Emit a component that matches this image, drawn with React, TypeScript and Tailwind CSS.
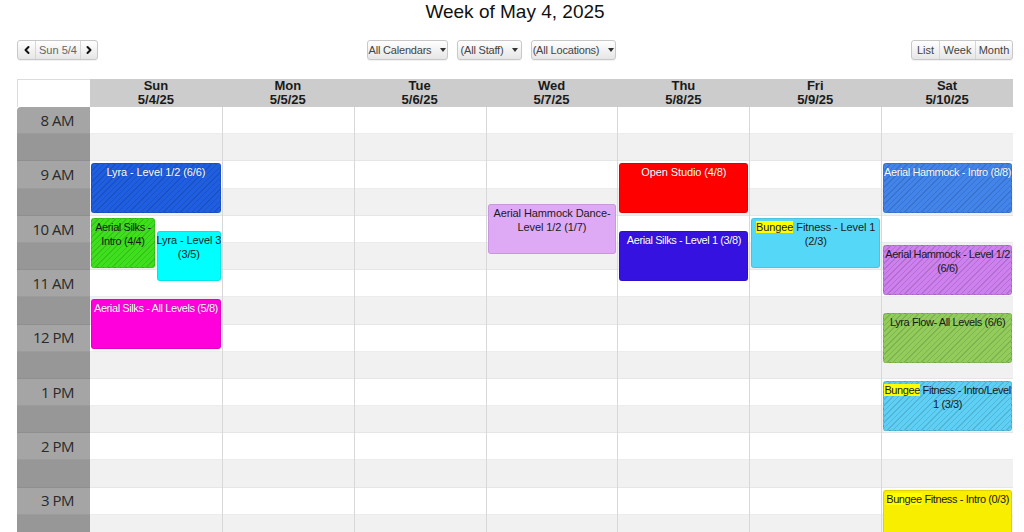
import React from "react";
import { ChevronLeft, ChevronRight } from "lucide-react";

const days = [
  ["Sun", "5/4/25"],
  ["Mon", "5/5/25"],
  ["Tue", "5/6/25"],
  ["Wed", "5/7/25"],
  ["Thu", "5/8/25"],
  ["Fri", "5/9/25"],
  ["Sat", "5/10/25"],
];

const HOUR = 54.4;
const stripe =
  "bg-[image:repeating-linear-gradient(135deg,rgba(0,0,0,0.13)_0px,rgba(0,0,0,0.13)_1px,transparent_1px,transparent_4px)]";

type Ev = {
  day: number;
  start: number; // minutes from 8:00
  pos: "full" | "left" | "right";
  bg: string;
  striped?: boolean;
  light?: boolean;
  tight?: boolean;
  lines: React.ReactNode[];
};

const Hl = ({ children }: { children: React.ReactNode }) => (
  <span className="bg-[#ffff00]">{children}</span>
);

const events: Ev[] = [
  { day: 0, start: 60, pos: "full", bg: "bg-[#1f5ee0]", striped: true, light: true, lines: ["Lyra - Level 1/2 (6/6)"] },
  { day: 0, start: 120, pos: "left", bg: "bg-[#3ee01e]", striped: true, tight: true, lines: ["Aerial Silks -", "Intro (4/4)"] },
  { day: 0, start: 135, pos: "right", bg: "bg-[#00ffff]", lines: ["Lyra - Level 3", "(3/5)"] },
  { day: 0, start: 210, pos: "full", bg: "bg-[#ff00dd]", light: true, tight: true, lines: ["Aerial Silks - All Levels (5/8)"] },
  { day: 3, start: 105, pos: "full", bg: "bg-[#dfaaf5]", lines: ["Aerial Hammock Dance-", "Level 1/2 (1/7)"] },
  { day: 4, start: 60, pos: "full", bg: "bg-[#ff0000]", light: true, lines: ["Open Studio (4/8)"] },
  { day: 4, start: 135, pos: "full", bg: "bg-[#3512e0]", light: true, tight: true, lines: ["Aerial Silks - Level 1 (3/8)"] },
  { day: 5, start: 120, pos: "full", bg: "bg-[#55d8f8]", lines: [<><Hl>Bungee</Hl> Fitness - Level 1</>, "(2/3)"] },
  { day: 6, start: 60, pos: "full", bg: "bg-[#4284ea]", striped: true, light: true, tight: true, lines: ["Aerial Hammock - Intro (8/8)"] },
  { day: 6, start: 150, pos: "full", bg: "bg-[#cd80ee]", striped: true, tight: true, lines: ["Aerial Hammock - Level 1/2", "(6/6)"] },
  { day: 6, start: 225, pos: "full", bg: "bg-[#92cd5c]", striped: true, tight: true, lines: ["Lyra Flow- All Levels (6/6)"] },
  { day: 6, start: 300, pos: "full", bg: "bg-[#5fd0f5]", striped: true, tight: true, lines: [<><Hl>Bungee</Hl> Fitness - Intro/Level</>, "1 (3/3)"] },
  { day: 6, start: 420, pos: "full", bg: "bg-[#f8ee00]", tight: true, lines: [<><Hl>Bungee</Hl> Fitness - Intro (0/3)</>] },
];

const hours = ["8 AM", "9 AM", "10 AM", "11 AM", "12 PM", "1 PM", "2 PM", "3 PM"];

function Btn({ children, className = "" }: { children: React.ReactNode; className?: string }) {
  return (
    <div
      className={
        "flex items-center h-[20px] border border-[#c8c8c8] rounded-[3px] bg-linear-to-b from-white to-[#e6e6e6] text-[11px] text-[#444] shadow-[0_1px_1px_rgba(0,0,0,0.06)] " +
        className
      }
    >
      {children}
    </div>
  );
}

function Caret() {
  return (
    <span className="ml-[9px] inline-block w-0 h-0 border-l-[3px] border-r-[3px] border-t-[4px] border-l-transparent border-r-transparent border-t-[#333]" />
  );
}

export default function App() {
  return (
    <div className="h-[532px] overflow-hidden bg-white font-['Liberation_Sans',Arial,sans-serif] pl-[17px] pr-[11px]">
      <div className="text-center text-[19px] leading-[22px] pt-[1px] text-[#111]">Week of May 4, 2025</div>

      <div className="relative h-[20px] mt-[17px]">
        <div className="absolute left-0 top-0">
          <Btn>
            <div className="w-[18px] h-full flex items-center justify-center border-r border-[#d6d6d6]">
              <ChevronLeft size={12} strokeWidth={4} color="#111" />
            </div>
            <div className="w-[44px] text-center text-[#666]">Sun 5/4</div>
            <div className="w-[17px] h-full flex items-center justify-center border-l border-[#d6d6d6]">
              <ChevronRight size={12} strokeWidth={4} color="#111" />
            </div>
          </Btn>
        </div>
        <div className="absolute left-[350px] top-0 flex gap-[9px]">
          <Btn className="w-[81px] justify-center tracking-[-0.2px]">All Calendars<Caret /></Btn>
          <Btn className="w-[65px] justify-center tracking-[-0.2px]">(All Staff)<Caret /></Btn>
          <Btn className="w-[85px] justify-center tracking-[-0.2px]">(All Locations)<Caret /></Btn>
        </div>
        <div className="absolute right-0 top-0">
          <Btn className="text-[#222]">
            <div className="w-[27px] text-center">List</div>
            <div className="w-[36px] h-full flex items-center justify-center border-l border-[#d6d6d6]">Week</div>
            <div className="w-[37px] h-full flex items-center justify-center border-l border-[#d6d6d6]">Month</div>
          </Btn>
        </div>
      </div>

      <div className="mt-[19px] grid grid-cols-[73px_repeat(7,1fr)]">
        {/* header */}
        <div className="h-[28px] border-l border-t border-[#dcdcdc] bg-white" />
        {days.map(([d, dt]) => (
          <div key={d} className="h-[28px] bg-[#cccccc] text-center font-bold text-[13px] leading-[14px] text-[#1a1a1a]">
            <div>{d}</div>
            <div>{dt}</div>
          </div>
        ))}

        {/* time column */}
        <div className="flex flex-col rounded-tl-[4px] overflow-hidden">
          {hours.map((h) => (
            <React.Fragment key={h}>
              <div className="h-[27.2px] bg-[#a5a5a5] border-b border-[#9c9c9c] flex items-center justify-end pr-[16px] font-['Open_Sans',sans-serif] text-[15px] tracking-[-0.5px] text-[#2a2a2a]">
                {h}
              </div>
              <div className="h-[27.2px] bg-[#979797] border-b border-[#8f8f8f]" />
            </React.Fragment>
          ))}
        </div>

        {days.map(([d], di) => (
          <div key={d} className={"relative flex flex-col " + (di === 0 ? "" : "border-l border-[#d8d8d8]")}>
            {hours.map((h) => (
              <React.Fragment key={h}>
                <div className="h-[27.2px] bg-white border-b border-[#ececec]" />
                <div className="h-[27.2px] bg-[#f1f1f1] border-b border-[#e6e6e6]" />
              </React.Fragment>
            ))}
            {events
              .filter((e) => e.day === di)
              .map((e, i) => {
                const posCls =
                  e.pos === "full"
                    ? "left-[1px] right-[1px]"
                    : e.pos === "left"
                    ? "left-[1px] w-[calc(50%-2px)]"
                    : "left-[calc(50%+1px)] w-[calc(50%-2px)]";
                return (
                  <div
                    key={i}
                    className={
                      "absolute h-[50px] rounded-[3px] border border-black/10 pt-[1px] flex flex-col items-center text-[11px] leading-[14px] " +
                      posCls +
                      " " +
                      e.bg +
                      " " +
                      (e.striped ? stripe : "") +
                      " " +
                      (e.tight ? "tracking-[-0.4px]" : "tracking-[-0.1px]") +
                      " " +
                      (e.light ? "text-white [text-shadow:0_0_1px_rgba(0,0,0,0.4)]" : "text-[#1a1a1a]")
                    }
                    style={{ top: (e.start / 60) * HOUR + 2 }}
                  >
                    {e.lines.map((l, li) => (
                      <div key={li} className="whitespace-nowrap">
                        {l}
                      </div>
                    ))}
                  </div>
                );
              })}
          </div>
        ))}
      </div>
    </div>
  );
}
